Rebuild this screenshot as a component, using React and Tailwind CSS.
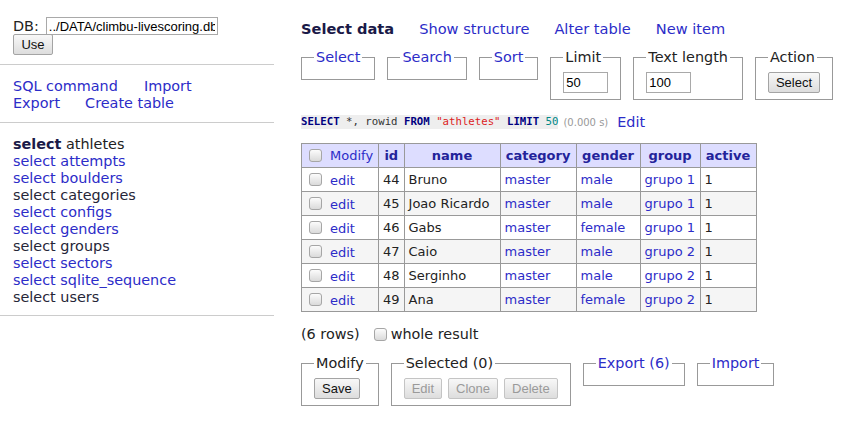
const link = 'text-[#2c2cc8]';
const dark = 'text-[#222]';

const tables = [
  ['athletes', 'current'],
  ['attempts', 'link'],
  ['boulders', 'link'],
  ['categories', 'visited'],
  ['configs', 'link'],
  ['genders', 'link'],
  ['groups', 'visited'],
  ['sectors', 'link'],
  ['sqlite_sequence', 'link'],
  ['users', 'visited'],
];

const rows = [
  [44, 'Bruno', 'master', 'male', 'grupo 1', 1],
  [45, 'Joao Ricardo', 'master', 'male', 'grupo 1', 1],
  [46, 'Gabs', 'master', 'female', 'grupo 1', 1],
  [47, 'Caio', 'master', 'male', 'grupo 2', 1],
  [48, 'Serginho', 'master', 'male', 'grupo 2', 1],
  [49, 'Ana', 'master', 'female', 'grupo 2', 1],
];

const cols = [
  ['id', 'w-[24px]'],
  ['name', 'w-[96px]'],
  ['category', 'w-[76px]'],
  ['gender', 'w-[64px]'],
  ['group', 'w-[60px]'],
  ['active', 'w-[56px]'],
];

const Check = () => (
  <span className="inline-block w-[13px] h-[13px] shrink-0 rounded-[3px] border border-[#a6a6a6] bg-linear-to-b from-[#fcfcfc] to-[#dadada]" />
);

const Btn = ({ children, disabled, className = '' }) => (
  <button
    className={`h-[21px] px-[7px] rounded-[2px] border font-['Liberation_Sans',sans-serif] text-[13px] leading-none bg-linear-to-b from-[#f8f8f8] to-[#dddddd] ${
      disabled ? 'border-[#c4c4c4] text-[#9a9a9a] px-[6px]' : 'border-[#a4a4a4] text-[#111]'
    } ${className}`}
  >
    {children}
  </button>
);

const Field = ({ legend, isLink, children }) => (
  <fieldset className="border border-[#999] px-[12px] pb-[6px] min-w-0">
    <legend className={`px-[2px] leading-[17px] ${isLink ? link : dark}`}>{legend}</legend>
    <div className="pt-[6px] flex gap-[6px]">{children}</div>
  </fieldset>
);

const EmptyField = ({ legend }) => (
  <fieldset className="border border-[#999] px-[12px] h-[31px]">
    <legend className={`px-[2px] leading-[17px] ${link}`}>{legend}</legend>
  </fieldset>
);

const SmallInput = ({ value }) => (
  <input
    readOnly
    value={value}
    className="w-[45px] h-[21px] border border-[#a9a9a9] px-[2px] font-['Liberation_Sans',sans-serif] text-[13px] text-black outline-none"
  />
);

export default function App() {
  return (
    <div className="flex w-[851px] min-h-[436px] bg-white font-['DejaVu_Sans',Verdana,sans-serif] text-[14.4px] leading-[17px] text-[#222]">
      <aside className="w-[274px] shrink-0">
        <div className="px-[13px] pt-[17px] pb-[9px]">
          <div className="flex items-center h-[18px]">
            <span>DB:</span>
            <input
              readOnly
              value="../DATA/climbu-livescoring.db"
              className="ml-[7px] w-[172px] h-[18px] border border-[#a9a9a9] px-[2px] font-['Liberation_Sans',sans-serif] text-[13px] text-black outline-none"
            />
          </div>
          <Btn className="mt-[-1px] h-[19px] w-[40px] px-0">Use</Btn>
        </div>
        <div className="border-t border-[#ccc] px-[13px] pt-[13px] pb-[10px]">
          <div className="flex gap-[26px]">
            <span className={link}>SQL command</span>
            <span className={link}>Import</span>
          </div>
          <div className="flex gap-[25px]">
            <span className={link}>Export</span>
            <span className={link}>Create table</span>
          </div>
        </div>
        <div className="border-t border-[#ccc] px-[13px] pt-[13px] pb-[9px]">
          {tables.map(([name, kind]) => (
            <div key={name}>
              {kind === 'current' ? (
                <span>
                  <b className="text-[#1a1a48]">select</b> {name}
                </span>
              ) : (
                <span className={kind === 'link' ? link : 'text-[#262638]'}>select {name}</span>
              )}
            </div>
          ))}
        </div>
        <div className="border-t border-[#ccc]" />
      </aside>

      <main className="flex-1 pl-[27px] pt-[20px]">
        <div className="flex gap-[25px] text-[14.6px] leading-[17px]">
          <b className="text-[#1a1a48]">Select data</b>
          <span className={link}>Show structure</span>
          <span className={link}>Alter table</span>
          <span className={link}>New item</span>
        </div>

        <div className="flex items-start gap-[12px] mt-[12px]">
          <EmptyField legend="Select" />
          <EmptyField legend="Search" />
          <EmptyField legend="Sort" />
          <Field legend="Limit">
            <SmallInput value="50" />
          </Field>
          <Field legend="Text length">
            <SmallInput value="100" />
          </Field>
          <Field legend="Action">
            <Btn>Select</Btn>
          </Field>
        </div>

        <div className="flex items-center mt-[15px] h-[14px]">
          <code className="bg-[#eee] font-['DejaVu_Sans_Mono',monospace] text-[10.7px] leading-[14px] text-[#333]">
            <b className="text-[#000080]">SELECT</b> *, rowid <b className="text-[#000080]">FROM</b>{' '}
            <span className="text-[#d22]">"athletes"</span> <b className="text-[#000080]">LIMIT</b>{' '}
            <span className="text-[#088]">50</span>
          </code>
          <span className="ml-[5px] text-[10px] text-[#999]">(0.000 s)</span>
          <span className={`ml-[9px] ${link}`}>Edit</span>
        </div>

        <table className="mt-[14px] border-collapse border border-[#999] text-[13px] leading-[16px]">
          <thead>
            <tr className="bg-[#ddf] h-[24px]">
              <th className="w-[77px] border border-[#999] pl-[7px] pr-[4px] font-normal text-left">
                <div className="flex items-center gap-[8px]">
                  <Check />
                  <span className={link}>Modify</span>
                </div>
              </th>
              {cols.map(([h, w]) => (
                <th key={h} className={`${w} border border-[#999] px-[4px] font-bold text-[#23239a] text-center`}>
                  {h}
                </th>
              ))}
            </tr>
          </thead>
          <tbody>
            {rows.map((r, i) => (
              <tr key={r[0]} className={`h-[24px] ${i % 2 ? 'bg-[#f5f5f5]' : 'bg-white'}`}>
                <td className="border border-[#999] pl-[7px] pr-[4px]">
                  <div className="flex items-center gap-[8px]">
                    <Check />
                    <span className={`${link} pt-[3px]`}>edit</span>
                  </div>
                </td>
                <td className="border border-[#999] px-[4px]">{r[0]}</td>
                <td className="border border-[#999] px-[4px] whitespace-nowrap">{r[1]}</td>
                <td className={`border border-[#999] px-[4px] ${link}`}>{r[2]}</td>
                <td className={`border border-[#999] px-[4px] ${link}`}>{r[3]}</td>
                <td className={`border border-[#999] px-[4px] whitespace-nowrap ${link}`}>{r[4]}</td>
                <td className="border border-[#999] px-[4px]">{r[5]}</td>
              </tr>
            ))}
          </tbody>
        </table>

        <div className="flex items-center mt-[14px] h-[17px]">
          <span>(6 rows)</span>
          <span className="ml-[14px] mr-[4px] inline-flex">
            <Check />
          </span>
          <span>whole result</span>
        </div>

        <div className="flex items-start gap-[12px] mt-[12px]">
          <Field legend="Modify">
            <Btn>Save</Btn>
          </Field>
          <Field legend="Selected (0)">
            <Btn disabled>Edit</Btn>
            <Btn disabled>Clone</Btn>
            <Btn disabled>Delete</Btn>
          </Field>
          <EmptyField legend="Export (6)" />
          <EmptyField legend="Import" />
        </div>
      </main>
    </div>
  );
}
